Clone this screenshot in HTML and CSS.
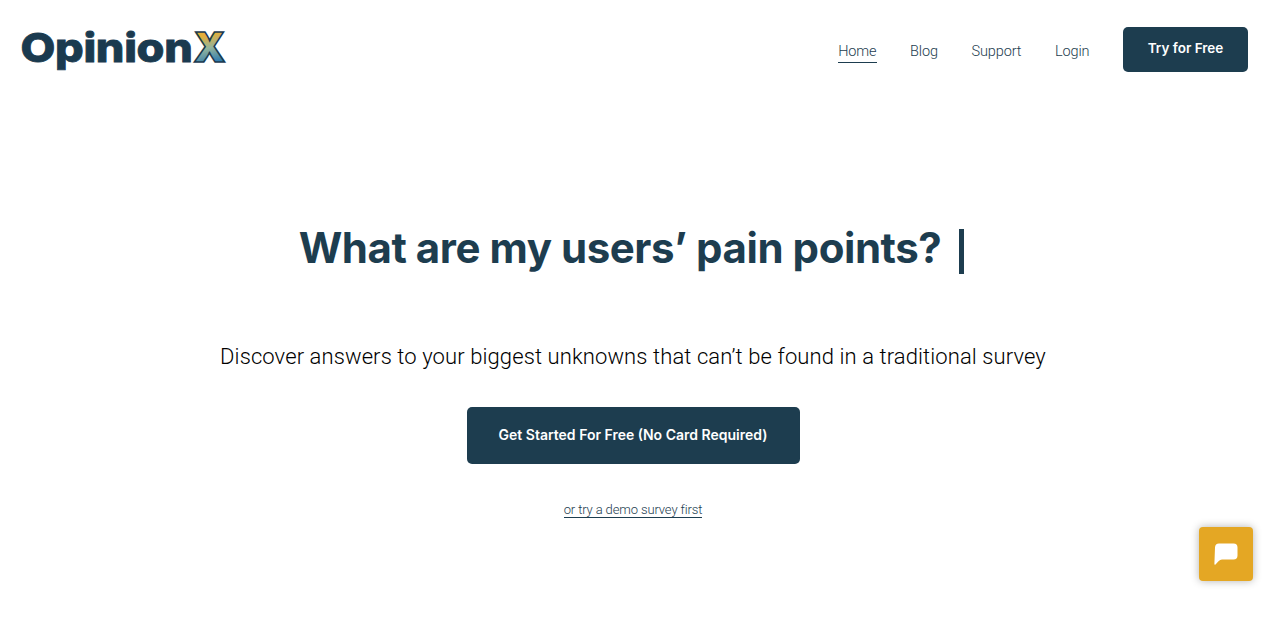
FILE: index.html
```html
<!DOCTYPE html>
<html lang="en">
  <head>
    <meta charset="UTF-8" />
    <meta name="viewport" content="width=device-width, initial-scale=1.0" />
    <title>OpinionX</title>
    <link rel="stylesheet" href="styles.css">
  </head>
  <body>
    <header class="main-header">
      <a href="#" class="logo">
        <svg width="220" height="60" viewBox="0 0 220 60">
          <defs>
            <linearGradient id="logoGradient" gradientUnits="userSpaceOnUse" x1="186" y1="12" x2="194" y2="43">
              <stop offset="0.1" stop-color="#e3ae3a" />
              <stop offset="0.5" stop-color="#93b49c" />
              <stop offset="1" stop-color="#2a78b0" />
            </linearGradient>
          </defs>
          <text class="logo__name" x="-0.5" y="42" textLength="172" lengthAdjust="spacingAndGlyphs">Opinion</text>
          <text class="logo__x" x="172.5" y="42" textLength="32" lengthAdjust="spacingAndGlyphs" fill="url(#logoGradient)">X</text>
        </svg>
      </a>
      <nav class="main-nav">
        <a href="#" class="main-nav__link main-nav__link--active">Home</a>
        <a href="#" class="main-nav__link">Blog</a>
        <a href="#" class="main-nav__link">Support</a>
        <a href="#" class="main-nav__link">Login</a>
        <a href="#" class="btn btn--small">Try for Free</a>
      </nav>
    </header>

    <main class="hero">
      <h1 class="hero__title">What are my users’ pain points?<span class="hero__cursor"></span></h1>
      <p class="hero__text">Discover answers to your biggest unknowns that can’t be found in a traditional survey</p>
      <a href="#" class="btn btn--large">Get Started For Free (No Card Required)</a>
      <a href="#" class="hero__demo">or try a demo survey first</a>
    </main>

    <button class="chat-button" aria-label="Open chat">
      <svg width="24" height="22" viewBox="0 0 24 22">
        <path d="M5 0.5H19.5Q23.5 0.5 23.5 4.5V12.5Q23.5 16.5 19.5 16.5H8Q6 16.5 4.5 18.3L1.5 21.4Q0.3 22.3 0.4 20.5L1 4.5Q1.2 0.5 5 0.5Z" fill="#fff" />
      </svg>
    </button>
  </body>
</html>
```
FILE: styles.css
```css
* {
  box-sizing: border-box;
}

body {
  margin: 0;
  font-family: Roboto, "Liberation Sans", sans-serif;
  font-weight: 300;
  color: #000;
  background-color: #fff;
}

a {
  text-decoration: none;
  color: inherit;
}

.main-header {
  height: 99px;
  padding: 0 32px 0 21px;
  display: flex;
  justify-content: space-between;
  align-items: center;
}

.logo svg {
  display: block;
}

.logo__name {
  font-family: Inter, sans-serif;
  font-size: 40px;
  font-weight: 800;
  letter-spacing: -0.3px;
  fill: #1a3a4f;
  stroke: #1a3a4f;
  stroke-width: 0.8px;
}

.logo__x {
  font-family: Inter, sans-serif;
  font-size: 41px;
  font-weight: 900;
  stroke: #1a3a4f;
  stroke-width: 1.6px;
}

.main-nav {
  display: flex;
  align-items: center;
  gap: 33.5px;
}

.main-nav__link {
  margin-top: 5px;
  border-bottom: 1px solid transparent;
  font-size: 14.5px;
  line-height: 20px;
  letter-spacing: -0.1px;
  color: #1d3d4f;
}

.main-nav__link--active {
  border-bottom-color: #1d3d4f;
}

.btn {
  border-radius: 5px;
  background-color: #1d3d4f;
  color: #fff;
  font-family: Inter, sans-serif;
  font-weight: 600;
  text-align: center;
}

.btn--small {
  width: 125px;
  height: 45px;
  font-size: 13.5px;
  line-height: 43px;
}

.btn--large {
  width: 333px;
  height: 57px;
  margin-top: 34px;
  font-size: 14px;
  line-height: 55px;
}

.hero {
  padding: 118px 14px 0 0;
  display: flex;
  flex-direction: column;
  align-items: center;
}

.hero__title {
  margin: 0 3px 0 0;
  display: flex;
  align-items: center;
  font-family: Inter, sans-serif;
  font-size: 42px;
  font-weight: 700;
  line-height: 62px;
  letter-spacing: -0.45px;
  white-space: nowrap;
  color: #1d3d4f;
}

.hero__cursor {
  width: 5px;
  height: 45px;
  margin: 6px 0 0 18px;
  background-color: #1d3d4f;
}

.hero__text {
  margin: 62px 0 0;
  font-size: 22px;
  line-height: 32px;
  letter-spacing: 0.1px;
  white-space: nowrap;
}

.hero__demo {
  margin-top: 38px;
  border-bottom: 1px solid #1d3d4f;
  font-size: 13px;
  line-height: 15px;
  letter-spacing: -0.12px;
  color: #1d3d4f;
}

.chat-button {
  position: fixed;
  right: 27px;
  bottom: 42px;
  width: 54px;
  height: 54px;
  padding: 0;
  display: flex;
  justify-content: center;
  align-items: center;
  border: none;
  border-radius: 4px;
  background-color: #e4a724;
  box-shadow: 0 0 8px rgba(0, 0, 0, 0.3);
  cursor: pointer;
}
```
